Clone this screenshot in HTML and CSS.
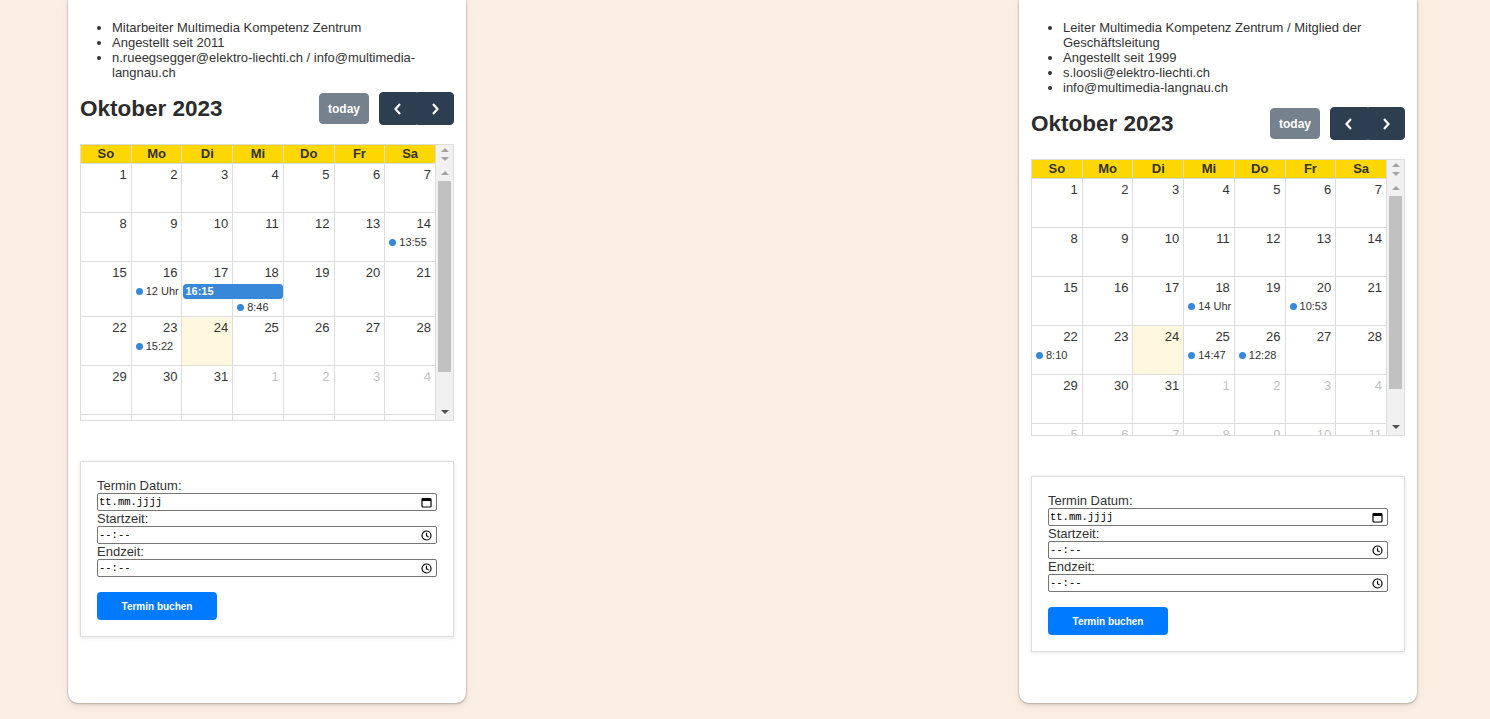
FILE: index.html
```html
<!DOCTYPE html>
<html lang="de">
<head>
<meta charset="utf-8">
<title>Termine</title>
<link rel="stylesheet" href="styles.css">
</head>
<body>
<div class="page">
  <section class="card">
    <ul class="info">
      <li>Mitarbeiter Multimedia Kompetenz Zentrum</li>
      <li>Angestellt seit 2011</li>
      <li>n.rueegsegger@elektro-liechti.ch / info@multimedia-langnau.ch</li>
    </ul>
    <div class="cal">
      <div class="toolbar">
        <h2 class="title">Oktober 2023</h2>
        <div class="tools">
          <button class="btn today" type="button">today</button>
          <div class="btn-group">
            <button class="btn nav" type="button" aria-label="zurück"><svg width="10" height="12" viewBox="0 0 10 12"><polyline points="7,1 2.5,6 7,11" fill="none" stroke="#fff" stroke-width="2.2"/></svg></button>
            <button class="btn nav" type="button" aria-label="weiter"><svg width="10" height="12" viewBox="0 0 10 12"><polyline points="3,1 7.5,6 3,11" fill="none" stroke="#fff" stroke-width="2.2"/></svg></button>
          </div>
        </div>
      </div>
      <div class="grid">
        <div class="head-row">
          <div class="dow">So</div><div class="dow">Mo</div><div class="dow">Di</div><div class="dow">Mi</div><div class="dow">Do</div><div class="dow">Fr</div><div class="dow">Sa</div>
        </div>
        <div class="sb sb-head"><span class="arr up"></span><span class="arr down"></span></div>
        <div class="body">
          <div class="week">
            <div class="day"><div class="num">1</div></div><div class="day"><div class="num">2</div></div><div class="day"><div class="num">3</div></div><div class="day"><div class="num">4</div></div><div class="day"><div class="num">5</div></div><div class="day"><div class="num">6</div></div><div class="day"><div class="num">7</div></div>
          </div>
          <div class="week">
            <div class="day"><div class="num">8</div></div><div class="day"><div class="num">9</div></div><div class="day"><div class="num">10</div></div><div class="day"><div class="num">11</div></div><div class="day"><div class="num">12</div></div><div class="day"><div class="num">13</div></div><div class="day"><div class="num">14</div></div>
            <div class="ev dot c7 l1">13:55</div>
          </div>
          <div class="week">
            <div class="day"><div class="num">15</div></div><div class="day"><div class="num">16</div></div><div class="day"><div class="num">17</div></div><div class="day"><div class="num">18</div></div><div class="day"><div class="num">19</div></div><div class="day"><div class="num">20</div></div><div class="day"><div class="num">21</div></div>
            <div class="ev dot c2 l1">12 Uhr</div>
            <div class="ev block c3 s2 l1">16:15</div>
            <div class="ev dot c4 l2">8:46</div>
          </div>
          <div class="week">
            <div class="day"><div class="num">22</div></div><div class="day"><div class="num">23</div></div><div class="day today-cell"><div class="num">24</div></div><div class="day"><div class="num">25</div></div><div class="day"><div class="num">26</div></div><div class="day"><div class="num">27</div></div><div class="day"><div class="num">28</div></div>
            <div class="ev dot c2 l1">15:22</div>
          </div>
          <div class="week">
            <div class="day"><div class="num">29</div></div><div class="day"><div class="num">30</div></div><div class="day"><div class="num">31</div></div><div class="day other"><div class="num">1</div></div><div class="day other"><div class="num">2</div></div><div class="day other"><div class="num">3</div></div><div class="day other"><div class="num">4</div></div>
          </div>
          <div class="week">
            <div class="day other"><div class="num">5</div></div><div class="day other"><div class="num">6</div></div><div class="day other"><div class="num">7</div></div><div class="day other"><div class="num">8</div></div><div class="day other"><div class="num">9</div></div><div class="day other"><div class="num">10</div></div><div class="day other"><div class="num">11</div></div>
          </div>
        </div>
        <div class="sb sb-body">
          <div class="sb-btn"><span class="arr up"></span></div>
          <div class="thumb" style="height:191px"></div>
          <div class="sb-fill"></div>
          <div class="sb-btn"><span class="arr down dark"></span></div>
        </div>
      </div>
    </div>
    <form class="booking">
      <label class="lbl">Termin Datum:</label>
      <div class="field"><span class="ph">tt.mm.jjjj</span><svg class="ico" width="11" height="11" viewBox="0 0 11 11"><rect x="1" y="1.5" width="9" height="8.5" rx="1" fill="none" stroke="#000" stroke-width="1.2"/><rect x="1" y="1.5" width="9" height="2.5" fill="#000"/></svg></div>
      <label class="lbl">Startzeit:</label>
      <div class="field"><span class="ph">--:--</span><svg class="ico" width="11" height="11" viewBox="0 0 11 11"><circle cx="5.5" cy="5.5" r="4.5" fill="none" stroke="#000" stroke-width="1.2"/><polyline points="5.5,2.8 5.5,5.8 7.6,7" fill="none" stroke="#000" stroke-width="1.1"/></svg></div>
      <label class="lbl">Endzeit:</label>
      <div class="field"><span class="ph">--:--</span><svg class="ico" width="11" height="11" viewBox="0 0 11 11"><circle cx="5.5" cy="5.5" r="4.5" fill="none" stroke="#000" stroke-width="1.2"/><polyline points="5.5,2.8 5.5,5.8 7.6,7" fill="none" stroke="#000" stroke-width="1.1"/></svg></div>
      <button class="submit" type="button">Termin buchen</button>
    </form>
  </section>

  <div class="spacer"></div>

  <section class="card">
    <ul class="info">
      <li>Leiter Multimedia Kompetenz Zentrum / Mitglied der Geschäftsleitung</li>
      <li>Angestellt seit 1999</li>
      <li>s.loosli@elektro-liechti.ch</li>
      <li>info@multimedia-langnau.ch</li>
    </ul>
    <div class="cal">
      <div class="toolbar">
        <h2 class="title">Oktober 2023</h2>
        <div class="tools">
          <button class="btn today" type="button">today</button>
          <div class="btn-group">
            <button class="btn nav" type="button" aria-label="zurück"><svg width="10" height="12" viewBox="0 0 10 12"><polyline points="7,1 2.5,6 7,11" fill="none" stroke="#fff" stroke-width="2.2"/></svg></button>
            <button class="btn nav" type="button" aria-label="weiter"><svg width="10" height="12" viewBox="0 0 10 12"><polyline points="3,1 7.5,6 3,11" fill="none" stroke="#fff" stroke-width="2.2"/></svg></button>
          </div>
        </div>
      </div>
      <div class="grid">
        <div class="head-row">
          <div class="dow">So</div><div class="dow">Mo</div><div class="dow">Di</div><div class="dow">Mi</div><div class="dow">Do</div><div class="dow">Fr</div><div class="dow">Sa</div>
        </div>
        <div class="sb sb-head"><span class="arr up"></span><span class="arr down"></span></div>
        <div class="body">
          <div class="week">
            <div class="day"><div class="num">1</div></div><div class="day"><div class="num">2</div></div><div class="day"><div class="num">3</div></div><div class="day"><div class="num">4</div></div><div class="day"><div class="num">5</div></div><div class="day"><div class="num">6</div></div><div class="day"><div class="num">7</div></div>
          </div>
          <div class="week">
            <div class="day"><div class="num">8</div></div><div class="day"><div class="num">9</div></div><div class="day"><div class="num">10</div></div><div class="day"><div class="num">11</div></div><div class="day"><div class="num">12</div></div><div class="day"><div class="num">13</div></div><div class="day"><div class="num">14</div></div>
          </div>
          <div class="week">
            <div class="day"><div class="num">15</div></div><div class="day"><div class="num">16</div></div><div class="day"><div class="num">17</div></div><div class="day"><div class="num">18</div></div><div class="day"><div class="num">19</div></div><div class="day"><div class="num">20</div></div><div class="day"><div class="num">21</div></div>
            <div class="ev dot c4 l1">14 Uhr</div>
            <div class="ev dot c6 l1">10:53</div>
          </div>
          <div class="week">
            <div class="day"><div class="num">22</div></div><div class="day"><div class="num">23</div></div><div class="day today-cell"><div class="num">24</div></div><div class="day"><div class="num">25</div></div><div class="day"><div class="num">26</div></div><div class="day"><div class="num">27</div></div><div class="day"><div class="num">28</div></div>
            <div class="ev dot c1 l1">8:10</div>
            <div class="ev dot c4 l1">14:47</div>
            <div class="ev dot c5 l1">12:28</div>
          </div>
          <div class="week">
            <div class="day"><div class="num">29</div></div><div class="day"><div class="num">30</div></div><div class="day"><div class="num">31</div></div><div class="day other"><div class="num">1</div></div><div class="day other"><div class="num">2</div></div><div class="day other"><div class="num">3</div></div><div class="day other"><div class="num">4</div></div>
          </div>
          <div class="week">
            <div class="day other"><div class="num">5</div></div><div class="day other"><div class="num">6</div></div><div class="day other"><div class="num">7</div></div><div class="day other"><div class="num">8</div></div><div class="day other"><div class="num">9</div></div><div class="day other"><div class="num">10</div></div><div class="day other"><div class="num">11</div></div>
          </div>
        </div>
        <div class="sb sb-body">
          <div class="sb-btn"><span class="arr up"></span></div>
          <div class="thumb" style="height:193px"></div>
          <div class="sb-fill"></div>
          <div class="sb-btn"><span class="arr down dark"></span></div>
        </div>
      </div>
    </div>
    <form class="booking">
      <label class="lbl">Termin Datum:</label>
      <div class="field"><span class="ph">tt.mm.jjjj</span><svg class="ico" width="11" height="11" viewBox="0 0 11 11"><rect x="1" y="1.5" width="9" height="8.5" rx="1" fill="none" stroke="#000" stroke-width="1.2"/><rect x="1" y="1.5" width="9" height="2.5" fill="#000"/></svg></div>
      <label class="lbl">Startzeit:</label>
      <div class="field"><span class="ph">--:--</span><svg class="ico" width="11" height="11" viewBox="0 0 11 11"><circle cx="5.5" cy="5.5" r="4.5" fill="none" stroke="#000" stroke-width="1.2"/><polyline points="5.5,2.8 5.5,5.8 7.6,7" fill="none" stroke="#000" stroke-width="1.1"/></svg></div>
      <label class="lbl">Endzeit:</label>
      <div class="field"><span class="ph">--:--</span><svg class="ico" width="11" height="11" viewBox="0 0 11 11"><circle cx="5.5" cy="5.5" r="4.5" fill="none" stroke="#000" stroke-width="1.2"/><polyline points="5.5,2.8 5.5,5.8 7.6,7" fill="none" stroke="#000" stroke-width="1.1"/></svg></div>
      <button class="submit" type="button">Termin buchen</button>
    </form>
  </section>
</div>
</body>
</html>
```

FILE: styles.css
```css
html, body {
  margin: 0;
  padding: 0;
  background: #faeee3;
}

body {
  font-family: "Liberation Sans", Arial, sans-serif;
  font-size: 13px;
  color: #333;
}

.page {
  display: grid;
  grid-template-columns: repeat(3, 398px);
  column-gap: 77.5px;
  align-items: stretch;
  height: 719px;
  box-sizing: border-box;
  padding: 0 0 16px 68px;
}

.card {
  background: #fff;
  border-radius: 0 0 10px 10px;
  box-shadow: 0 0 0 1px rgba(0, 0, 0, 0.1), 0 2px 3px rgba(0, 0, 0, 0.12), 0 3px 10px rgba(0, 0, 0, 0.05);
  padding: 20px 12px 0;
  box-sizing: border-box;
  min-width: 0;
}

.info {
  margin: 0;
  padding: 0 0 0 32px;
  line-height: 15px;
  font-size: 13px;
}

/* calendar */
.toolbar {
  display: flex;
  justify-content: space-between;
  align-items: center;
  margin: 12px 0 19px;
  height: 33px;
}

.title {
  margin: 0;
  font-size: 22.5px;
  font-weight: bold;
  line-height: 27px;
  color: #2b2b2b;
}

.tools {
  display: flex;
  align-items: center;
  gap: 10px;
}

.btn {
  border: 1px solid #2c3e50;
  background: #2c3e50;
  color: #fff;
  font-family: inherit;
  padding: 0;
  cursor: pointer;
  display: flex;
  align-items: center;
  justify-content: center;
  box-sizing: border-box;
}

.today {
  width: 50px;
  height: 31px;
  border-radius: 4px;
  opacity: 0.65;
  font-size: 12px;
  font-weight: bold;
}

.btn-group {
  display: flex;
}

.nav {
  width: 37.5px;
  height: 33px;
}

.nav:first-child {
  border-radius: 4px 0 0 4px;
}

.nav:last-child {
  border-radius: 0 4px 4px 0;
}

.grid {
  display: grid;
  grid-template-columns: minmax(0, 1fr) 17px;
  border: 1px solid #ddd;
}

.head-row {
  display: grid;
  grid-template-columns: repeat(7, minmax(0, 1fr));
  border-bottom: 1px solid #ddd;
}

.dow {
  background: #ffd700;
  border-right: 1px solid #ddd;
  font-weight: bold;
  text-align: center;
  line-height: 14px;
  padding: 2px 0;
}

.sb {
  background: #f1f1f1;
}

.sb-head {
  display: flex;
  flex-direction: column;
  align-items: center;
  padding-top: 3px;
  gap: 5px;
  box-sizing: border-box;
}

.arr {
  display: block;
  width: 0;
  height: 0;
  border-left: 4px solid transparent;
  border-right: 4px solid transparent;
}

.arr.up {
  border-bottom: 4px solid #a3a3a3;
}

.arr.down {
  border-top: 4px solid #a3a3a3;
}

.arr.down.dark {
  border-top-color: #505050;
}

.sb-body {
  display: flex;
  flex-direction: column;
  height: 256px;
}

.sb-btn {
  height: 17px;
  flex: none;
  display: flex;
  align-items: center;
  justify-content: center;
}

.thumb {
  flex: none;
  margin: 0 2px;
  background: #c1c1c1;
}

.sb-fill {
  flex: 1;
}

.body {
  height: 256px;
  overflow: hidden;
  min-width: 0;
}

.week {
  display: grid;
  grid-template-columns: repeat(7, minmax(0, 1fr));
  grid-template-rows: 22px auto auto 1fr;
  min-height: 48px;
  border-bottom: 1px solid #ddd;
}

.day {
  grid-row: 1 / -1;
  border-right: 1px solid #ddd;
  min-width: 0;
}

.day:nth-child(1) { grid-column: 1; }
.day:nth-child(2) { grid-column: 2; }
.day:nth-child(3) { grid-column: 3; }
.day:nth-child(4) { grid-column: 4; }
.day:nth-child(5) { grid-column: 5; }
.day:nth-child(6) { grid-column: 6; }
.day:nth-child(7) { grid-column: 7; }

.today-cell {
  background: #fff7de;
}

.num {
  padding: 3px 4px 4px;
  line-height: 15px;
  text-align: right;
}

.other .num {
  color: #c2c2c2;
}

.ev {
  font-size: 11px;
  line-height: 13px;
  height: 15px;
  box-sizing: border-box;
  margin: 0 1px 1px;
  white-space: nowrap;
  overflow: hidden;
  min-width: 0;
}

.dot {
  display: flex;
  align-items: center;
  color: #333;
}

.dot::before {
  content: "";
  flex: none;
  width: 7px;
  height: 7px;
  border-radius: 50%;
  background: #3788d8;
  margin: 0 3px 0 3px;
}

.block {
  background: #3788d8;
  border: 1px solid #3788d8;
  border-radius: 3px;
  color: #fff;
  font-weight: bold;
  padding-left: 1px;
}

.c1 { grid-column: 1; }
.c2 { grid-column: 2; }
.c3 { grid-column: 3; }
.c4 { grid-column: 4; }
.c5 { grid-column: 5; }
.c6 { grid-column: 6; }
.c7 { grid-column: 7; }
.s2 { grid-column-end: span 2; }
.l1 { grid-row: 2; }
.l2 { grid-row: 3; }

/* booking form */
.booking {
  margin-top: 40px;
  border: 1px solid #ddd;
  box-shadow: 0 1px 4px rgba(0, 0, 0, 0.1);
  padding: 16px;
  display: flex;
  flex-direction: column;
  align-items: flex-start;
}

.lbl {
  display: block;
  line-height: 15px;
  font-size: 13px;
  color: #333;
}

.field {
  align-self: stretch;
  display: flex;
  align-items: center;
  justify-content: space-between;
  height: 18px;
  box-sizing: border-box;
  border: 1px solid #767676;
  border-radius: 2px;
  padding: 0 4px 0 1px;
  font-family: "Liberation Mono", monospace;
  font-size: 10.5px;
  color: #000;
}

.ico {
  display: block;
}

.submit {
  margin-top: 15px;
  width: 120px;
  height: 28px;
  border: none;
  border-radius: 4px;
  background: #007bff;
  color: #fff;
  font-family: inherit;
  font-size: 10px;
  font-weight: bold;
  cursor: pointer;
}
```
